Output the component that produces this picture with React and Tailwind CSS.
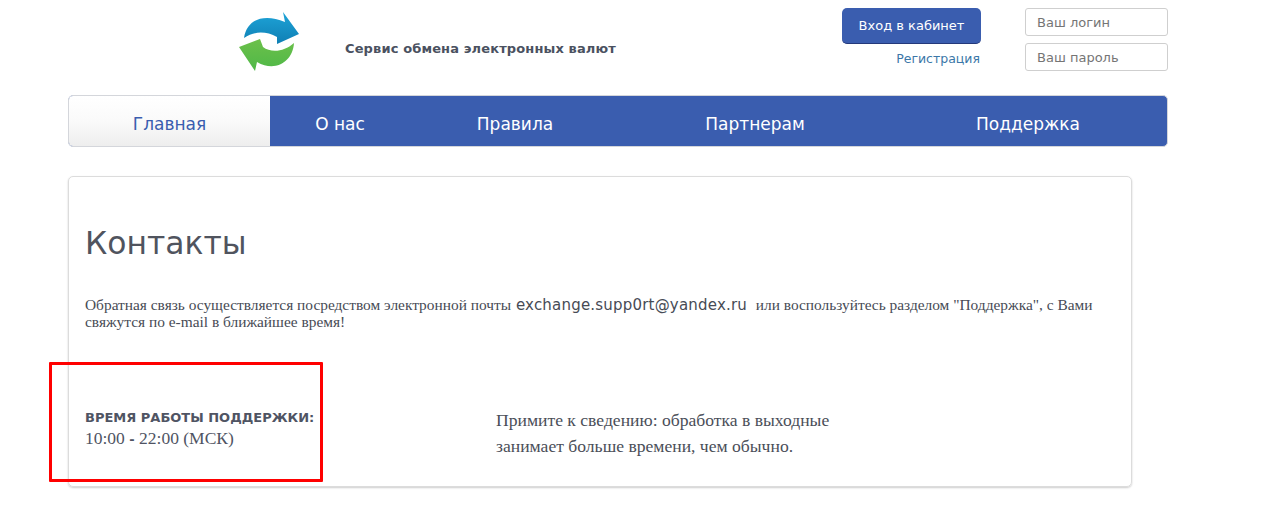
export default function App() {
  const sans = "font-['DejaVu_Sans',Verdana,sans-serif]";
  const serif = "font-['Liberation_Serif','Times_New_Roman',serif]";
  return (
    <div className={`relative h-[526px] w-[1281px] overflow-hidden bg-white pl-[68px] ${sans}`}>
      <header className="flex h-[95px] w-[1100px] items-start">
        <div className="ml-[170px] mt-[11px] h-[62px] w-[63px] shrink-0">
          <svg viewBox="0 0 63 62" width="63" height="62">
            <defs>
              <linearGradient id="b" x1="0" y1="0" x2="0" y2="1">
                <stop offset="0" stopColor="#1ea4d8" />
                <stop offset="1" stopColor="#0f7fb4" />
              </linearGradient>
              <linearGradient id="g" x1="0" y1="0" x2="0" y2="1">
                <stop offset="0" stopColor="#6cc04a" />
                <stop offset="1" stopColor="#4fb848" />
              </linearGradient>
            </defs>
            <path d="M6 27 C9 8 26 2 47 11 L45 1 L61 23 L39 33 L39 26 C28 20 16 20 6 27 Z" fill="url(#b)" />
            <path d="M56 32 C55 50 38 62 19 51 L17 60 L1 36 L22 28 L25 36 C33 42 46 41 56 32 Z" fill="url(#g)" />
          </svg>
        </div>
        <div className="ml-[44px] mt-[41px] text-[13px] font-bold leading-4 tracking-[0.13px] text-[#4a5160]">
          Сервис обмена электронных валют
        </div>
        <div className="ml-auto mt-2 flex w-[139px] flex-col items-end">
          <button className="h-9 w-full rounded-[5px] border-b border-b-[#24397a] bg-[#3a5daf] text-[13px] text-white">
            Вход в кабинет
          </button>
          <a className="mr-px mt-[7px] text-[12.5px] leading-4 text-[#3b77a8]">Регистрация</a>
        </div>
        <div className="ml-11 mt-2 flex w-[143px] flex-col gap-[7px]">
          <div className="flex h-[28px] items-center rounded-[3px] border border-[#cfcfcf] pl-[11px] pt-px text-[13px] text-[#757575]">Ваш логин</div>
          <div className="flex h-[28px] items-center rounded-[3px] border border-[#cfcfcf] pl-[11px] pt-px text-[13px] text-[#757575]">Ваш пароль</div>
        </div>
      </header>

      <nav className="flex h-[52px] w-[1100px] overflow-hidden rounded-[5px] border border-[#d4d6db] bg-[#3a5daf] text-[17px] text-white">
        <a className="flex w-[201px] items-center justify-center bg-gradient-to-b from-white via-[#fafafa] to-[#eeeeee] pt-2 text-[#3a5daf]">Главная</a>
        <a className="flex w-[140px] items-center justify-center pt-2">О нас</a>
        <a className="flex w-[210px] items-center justify-center pt-2">Правила</a>
        <a className="flex w-[270px] items-center justify-center pt-2">Партнерам</a>
        <a className="flex w-[276px] items-center justify-center pt-2">Поддержка</a>
      </nav>

      <main className="mt-[29px] h-[311px] w-[1064px] rounded-[5px] border border-[#dcdcdc] px-4 pt-[43px] shadow-[0_1px_2px_rgba(0,0,0,0.2)]">
        <h1 className="text-[31.4px] font-normal leading-[46px] text-[#50545e]">Контакты</h1>
        <p className={`mt-[30px] w-[1020px] text-[15.4px] leading-[17px] text-[#474b55] ${serif}`}>
          Обратная связь осуществляется посредством электронной почты <span className={`mx-px text-[15px] leading-none tracking-[0.2px] ${sans}`}>exchange.supp0rt@yandex.ru</span>&nbsp; или воспользуйтесь разделом "Поддержка", с Вами свяжутся по e-mail в ближайшее время!
        </p>
        <div className="mt-[80px] flex items-start">
          <div className="w-[411px]">
            <div className="text-[13px] font-bold uppercase leading-4 text-[#4f5463]">Время работы поддержки:</div>
            <div className={`mt-px text-[17.5px] leading-[22px] text-[#4f5463] ${serif}`}>
              10:00 <b className={`text-[13px] ${sans}`}>-</b> 22:00 (МСК)
            </div>
          </div>
          <p className={`-mt-[3px] w-[350px] text-[17.6px] leading-[26px] text-[#4a4e58] ${serif}`}>
            Примите к сведению: обработка в выходные занимает больше времени, чем обычно.
          </p>
        </div>
      </main>

      <div className="absolute left-[49px] top-[362px] h-[120px] w-[274px] rounded-[1px] border-[3px] border-[#ff0000]" />
    </div>
  );
}
